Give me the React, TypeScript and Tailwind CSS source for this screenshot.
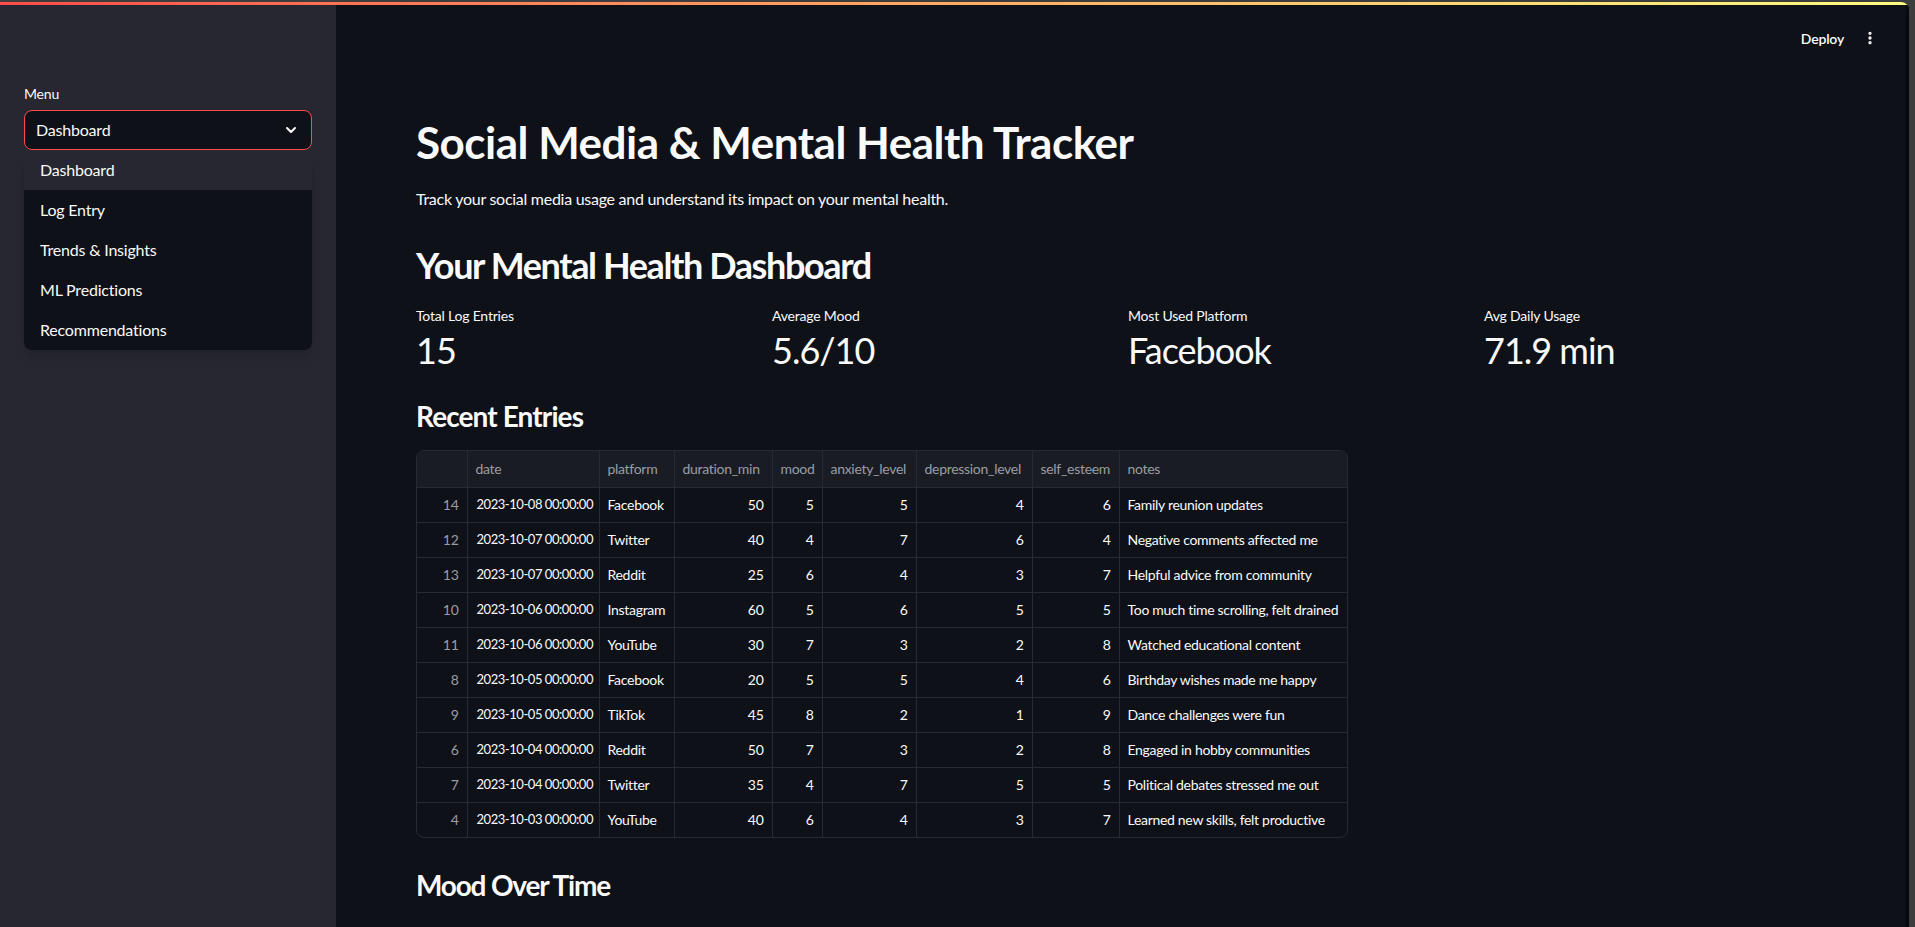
import { ChevronDown, EllipsisVertical } from "lucide-react";

const menuItems = ["Dashboard", "Log Entry", "Trends & Insights", "ML Predictions", "Recommendations"];

const metrics = [
  { label: "Total Log Entries", value: "15" },
  { label: "Average Mood", value: "5.6/10" },
  { label: "Most Used Platform", value: "Facebook" },
  { label: "Avg Daily Usage", value: "71.9 min" },
];

const columns = [
  { name: "", w: "w-[50px]" },
  { name: "date", w: "w-[132px]" },
  { name: "platform", w: "w-[75px]" },
  { name: "duration_min", w: "w-[98px]" },
  { name: "mood", w: "w-[50px]" },
  { name: "anxiety_level", w: "w-[94px]" },
  { name: "depression_level", w: "w-[116px]" },
  { name: "self_esteem", w: "w-[87px]" },
  { name: "notes", w: "w-[230px]" },
];

// index, date, platform, duration, mood, anxiety, depression, self esteem, notes
const rows: [number, string, string, number, number, number, number, number, string][] = [
  [14, "2023-10-08 00:00:00", "Facebook", 50, 5, 5, 4, 6, "Family reunion updates"],
  [12, "2023-10-07 00:00:00", "Twitter", 40, 4, 7, 6, 4, "Negative comments affected me"],
  [13, "2023-10-07 00:00:00", "Reddit", 25, 6, 4, 3, 7, "Helpful advice from community"],
  [10, "2023-10-06 00:00:00", "Instagram", 60, 5, 6, 5, 5, "Too much time scrolling, felt drained"],
  [11, "2023-10-06 00:00:00", "YouTube", 30, 7, 3, 2, 8, "Watched educational content"],
  [8, "2023-10-05 00:00:00", "Facebook", 20, 5, 5, 4, 6, "Birthday wishes made me happy"],
  [9, "2023-10-05 00:00:00", "TikTok", 45, 8, 2, 1, 9, "Dance challenges were fun"],
  [6, "2023-10-04 00:00:00", "Reddit", 50, 7, 3, 2, 8, "Engaged in hobby communities"],
  [7, "2023-10-04 00:00:00", "Twitter", 35, 4, 7, 5, 5, "Political debates stressed me out"],
  [4, "2023-10-03 00:00:00", "YouTube", 40, 6, 4, 3, 7, "Learned new skills, felt productive"],
];

function Sidebar() {
  return (
    <aside className="w-[336px] shrink-0 bg-[#262730] px-6 pt-[82px] tracking-[-0.2px]">
      <div className="text-[14px] leading-5 text-[#fafafa]">Menu</div>
      <div className="mt-[6px] flex h-10 items-center justify-between rounded-lg border border-[#ff4b4b] bg-[#0e1117] pl-[11px] pr-[12px] text-[16px] text-[#fafafa]">
        <span>Dashboard</span>
        <ChevronDown size={16} strokeWidth={3} />
      </div>
      <ul className="overflow-hidden rounded-b-lg bg-[#0e1117] shadow-lg">
        {menuItems.map((item, i) => (
          <li
            key={item}
            className={`flex h-10 items-center px-4 text-[16px] text-[#fafafa] ${i === 0 ? "bg-[#262730]" : ""}`}
          >
            {item}
          </li>
        ))}
      </ul>
    </aside>
  );
}

function DataTable() {
  return (
    <div className="w-[932px] overflow-hidden rounded-lg border border-[#262a31]">
      <table className="w-full table-fixed border-collapse text-[14px] tracking-[-0.3px]">
        <colgroup>
          {columns.map((c, i) => (
            <col key={i} className={c.w} />
          ))}
        </colgroup>
        <thead>
          <tr className="h-[36px] bg-[#1a1c24] text-[#9b9da3]">
            {columns.map((c, i) => (
              <th key={i} className="border-l border-[#262a31] px-2 text-left font-normal first:border-l-0">
                {c.name}
              </th>
            ))}
          </tr>
        </thead>
        <tbody className="text-[#fafafa]">
          {rows.map((r) => (
            <tr key={r[0]} className="h-[35px] border-t border-[#262a31]">
              <td className="px-2 text-right text-[#9b9da3]">{r[0]}</td>
              <td className="border-l border-[#262a31] pl-[9px] pr-1 text-[13px] tracking-[-0.45px] whitespace-nowrap">
                {r[1]}
              </td>
              <td className="border-l border-[#262a31] px-2">{r[2]}</td>
              <td className="border-l border-[#262a31] px-2 text-right">{r[3]}</td>
              <td className="border-l border-[#262a31] px-2 text-right">{r[4]}</td>
              <td className="border-l border-[#262a31] px-2 text-right">{r[5]}</td>
              <td className="border-l border-[#262a31] px-2 text-right">{r[6]}</td>
              <td className="border-l border-[#262a31] px-2 text-right">{r[7]}</td>
              <td className="border-l border-[#262a31] px-2 whitespace-nowrap">{r[8]}</td>
            </tr>
          ))}
        </tbody>
      </table>
    </div>
  );
}

export default function App() {
  return (
    <div className="flex h-[927px] w-full overflow-hidden bg-[#3d3d3d] pt-[2px] pr-[6px] font-['Lato',sans-serif]">
      <div className="relative flex flex-1 overflow-hidden rounded-tr-lg">
        {/* top decoration */}
        <div className="absolute inset-x-0 top-0 h-[3px] bg-gradient-to-r from-[#ff4b4b] to-[#fffd80]" />

        <Sidebar />

        <main className="flex-1 border-r-[3px] border-[#08090c] bg-[#0e1117] text-[#fafafa]">
          <header className="flex h-[72px] items-center justify-end gap-[18px] pr-[28px]">
            <span className="text-[14px] font-semibold tracking-[-0.2px]">Deploy</span>
            <EllipsisVertical size={16} strokeWidth={3} />
          </header>

          <div className="px-20 pt-[42px]">
            <h1 className="text-[44px] font-bold leading-[53px] tracking-[-0.5px]">
              Social Media &amp; Mental Health Tracker
            </h1>
            <p className="mt-[18px] text-[16px] leading-6 tracking-[-0.27px]">
              Track your social media usage and understand its impact on your mental health.
            </p>

            <h2 className="mt-[32px] text-[36px] font-bold leading-[44px] tracking-[-1.4px]">
              Your Mental Health Dashboard
            </h2>

            <div className="mt-[19px] grid w-[1408px] grid-cols-4 gap-4">
              {metrics.map((m) => (
                <div key={m.label}>
                  <div className="text-[14px] leading-5 tracking-[-0.2px]">{m.label}</div>
                  <div className="mt-[2px] text-[36px] leading-[44px] tracking-[-1px]">{m.value}</div>
                </div>
              ))}
            </div>

            <h3 className="mt-[26px] text-[28px] font-bold leading-9 tracking-[-0.9px]">Recent Entries</h3>
            <div className="mt-4">
              <DataTable />
            </div>

            <h3 className="mt-[29px] text-[28px] font-bold leading-9 tracking-[-1.2px]">Mood Over Time</h3>
          </div>
        </main>
      </div>
    </div>
  );
}
